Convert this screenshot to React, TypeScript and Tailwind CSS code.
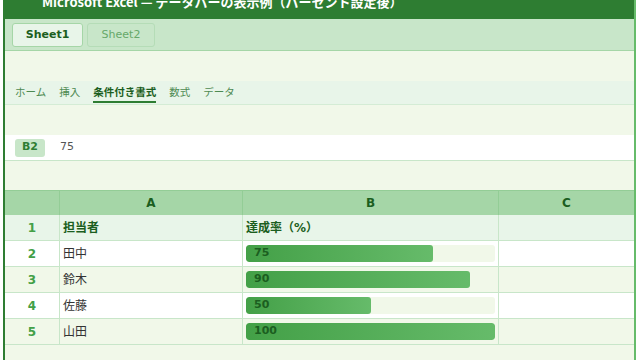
const rows = [
  { n: 2, name: '田中', v: 75 },
  { n: 3, name: '鈴木', v: 90 },
  { n: 4, name: '佐藤', v: 50 },
  { n: 5, name: '山田', v: 100 },
];

const ui = "font-['DejaVu_Sans','Noto_Sans_CJK_JP',sans-serif]";

export default function App() {
  return (
    <div className={`w-[640px] h-[360px] overflow-hidden bg-white ${ui}`}>
      <div className="ml-[3px] w-[633px] h-[400px] -mt-[16px] border-l-2 border-l-[#2e7d32] border-r-2 border-r-[#66bb6a] bg-[#f1f8e9] flex flex-col">
        {/* title */}
        <div className="h-[35px] shrink-0 bg-[#2e7d32] flex items-center pl-[37px] text-white text-[13px] font-bold font-['Noto_Sans_CJK_JP',sans-serif]">
          Microsoft Excel — データバーの表示例（パーセント設定後）
        </div>

        {/* sheet tabs */}
        <div className="h-[32px] shrink-0 bg-[#c8e6c9] border-b border-[#a5d6a7] flex items-start gap-[4px] pl-[7px] pt-[4px]">
          <div className="w-[71px] h-[24px] rounded-[3px] bg-[#e8f5e9] border border-[#a5d6a7] flex items-center justify-center text-[11px] font-bold text-[#1b5e20]">
            Sheet1
          </div>
          <div className="w-[68px] h-[24px] rounded-[3px] bg-[#c8e6c9] border border-[#b5dcb7] flex items-center justify-center text-[11px] text-[#66a86a]">
            Sheet2
          </div>
        </div>

        <div className="h-[30px] shrink-0" />

        {/* ribbon tabs */}
        <div className="h-[24px] shrink-0 bg-[#e8f5e9] border-b border-[#d4ecd5] flex items-center gap-[13px] pl-[10px] text-[10.5px] text-[#4e8a52]">
          <span>ホーム</span>
          <span>挿入</span>
          <span className="relative font-bold text-[#1b5e20]">
            条件付き書式
            <span className="absolute left-0 right-0 -bottom-[3px] h-[2px] bg-[#2e7d32]" />
          </span>
          <span>数式</span>
          <span>データ</span>
        </div>

        <div className="h-[30px] shrink-0" />

        {/* formula bar */}
        <div className="h-[26px] shrink-0 bg-white border-b border-[#c8e6c9] flex items-center pl-[10px] gap-[15px]">
          <div className="w-[30px] h-[18px] rounded-[3px] bg-[#c8e6c9] flex items-center justify-center text-[11px] font-bold text-[#2e7d32]">
            B2
          </div>
          <span className="text-[11px] text-[#555]">75</span>
        </div>

        <div className="h-[29px] shrink-0" />

        {/* grid */}
        <div className="grid grid-cols-[55px_183px_256px_1fr] text-[12px]">
          <div className="h-[25px] bg-[#a5d6a7] border-r border-[#8fcb92] border-t border-[#93cd96]" />
          <div className="h-[25px] bg-[#a5d6a7] border-r border-[#8fcb92] border-t border-[#93cd96] flex items-center justify-center font-bold text-[#1b5e20]">A</div>
          <div className="h-[25px] bg-[#a5d6a7] border-r border-[#8fcb92] border-t border-[#93cd96] flex items-center justify-center font-bold text-[#1b5e20]">B</div>
          <div className="h-[25px] bg-[#a5d6a7] border-t border-[#93cd96] flex items-center justify-center font-bold text-[#1b5e20]">C</div>

          <div className="h-[26px] bg-[#e8f5e9] border-r border-b border-[#c8e6c9] flex items-center justify-center font-bold text-[#43a047]">1</div>
          <div className="h-[26px] bg-[#e8f5e9] border-r border-b border-[#c8e6c9] flex items-center pl-[3px] font-bold text-[#1b5e20]">担当者</div>
          <div className="h-[26px] bg-[#e8f5e9] border-r border-b border-[#c8e6c9] flex items-center pl-[3px] font-bold text-[#1b5e20]">達成率（%）</div>
          <div className="h-[26px] bg-[#e8f5e9] border-b border-[#c8e6c9]" />

          {rows.map((r, i) => {
            const bg = i % 2 === 0 ? 'bg-white' : 'bg-[#f1f8e9]';
            return [
              <div key={`h${r.n}`} className={`h-[26px] ${bg} border-r border-b border-[#c8e6c9] flex items-center justify-center font-bold text-[#43a047]`}>{r.n}</div>,
              <div key={`a${r.n}`} className={`h-[26px] ${bg} border-r border-b border-[#c8e6c9] flex items-center pl-[3px] text-[#333]`}>{r.name}</div>,
              <div key={`b${r.n}`} className={`h-[26px] ${bg} border-r border-b border-[#c8e6c9] px-[3px] py-[4px]`}>
                <div className="h-full rounded-[3px] bg-[#f1f8e9] relative overflow-hidden">
                  <div
                    className="h-full rounded-[3px] bg-gradient-to-r from-[#43a047] to-[#66bb6a] flex items-center pl-[8px] text-[11px] font-bold text-[#1b5e20]"
                    style={{ width: `${r.v}%` }}
                  >
                    {r.v}
                  </div>
                </div>
              </div>,
              <div key={`c${r.n}`} className={`h-[26px] ${bg} border-b border-[#c8e6c9]`} />,
            ];
          })}
        </div>
      </div>
    </div>
  );
}
